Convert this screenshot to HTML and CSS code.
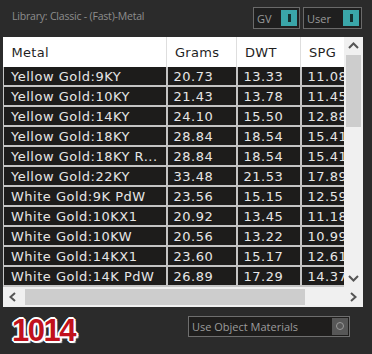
FILE: index.html
```html
<!DOCTYPE html>
<html lang="en">
<head>
  <meta charset="UTF-8" />
  <title>Metal Library</title>
  <link rel="stylesheet" href="styles.css">
</head>
<body>
  <div class="top">
    <span class="title">Library: Classic - (Fast)-Metal</span>
    <div class="toggles">
      <div class="toggle"><span>GV</span><i class="knob"></i></div>
      <div class="toggle user"><span>User</span><i class="knob"></i></div>
    </div>
  </div>

  <div class="panel">
    <div class="view">
      <div class="table-wrap">
        <table class="metals">
          <colgroup>
            <col class="c-metal"><col class="c-grams"><col class="c-dwt"><col class="c-spg">
          </colgroup>
          <thead>
            <tr><th>Metal</th><th>Grams</th><th>DWT</th><th>SPG</th></tr>
          </thead>
          <tbody>
            <tr><td>Yellow Gold:9KY</td><td>20.73</td><td>13.33</td><td>11.08</td></tr>
            <tr><td>Yellow Gold:10KY</td><td>21.43</td><td>13.78</td><td>11.45</td></tr>
            <tr><td>Yellow Gold:14KY</td><td>24.10</td><td>15.50</td><td>12.88</td></tr>
            <tr><td>Yellow Gold:18KY</td><td>28.84</td><td>18.54</td><td>15.41</td></tr>
            <tr><td>Yellow Gold:18KY R...</td><td>28.84</td><td>18.54</td><td>15.41</td></tr>
            <tr><td>Yellow Gold:22KY</td><td>33.48</td><td>21.53</td><td>17.89</td></tr>
            <tr><td>White Gold:9K PdW</td><td>23.56</td><td>15.15</td><td>12.59</td></tr>
            <tr><td>White Gold:10KX1</td><td>20.92</td><td>13.45</td><td>11.18</td></tr>
            <tr><td>White Gold:10KW</td><td>20.56</td><td>13.22</td><td>10.99</td></tr>
            <tr><td>White Gold:14KX1</td><td>23.60</td><td>15.17</td><td>12.61</td></tr>
            <tr><td>White Gold:14K PdW</td><td>26.89</td><td>17.29</td><td>14.37</td></tr>
          </tbody>
        </table>
      </div>
      <div class="vscroll">
        <svg class="arrow" width="19" height="18" viewBox="0 0 19 18"><polyline points="5,11 9.5,6.5 14,11" fill="none" stroke="#555" stroke-width="2"/></svg>
        <div class="vthumb"></div>
        <div class="vtrack"></div>
        <svg class="arrow" width="19" height="18" viewBox="0 0 19 18"><polyline points="5,7 9.5,11.5 14,7" fill="none" stroke="#555" stroke-width="2"/></svg>
      </div>
    </div>
    <div class="hscroll">
      <svg class="arrow" width="20" height="20" viewBox="0 0 20 20"><polyline points="12,6 7.5,10 12,14" fill="none" stroke="#555" stroke-width="2"/></svg>
      <div class="hthumb"></div>
      <div class="htrack"></div>
      <svg class="arrow" width="20" height="20" viewBox="0 0 20 20"><polyline points="8,6 12.5,10 8,14" fill="none" stroke="#555" stroke-width="2"/></svg>
    </div>
  </div>

  <div class="bottom">
    <span class="count">1014</span>
    <div class="check">
      <span>Use Object Materials</span>
      <i class="radio"></i>
    </div>
  </div>
</body>
</html>
```

FILE: styles.css
```css
body { margin: 0; background: #2b2b2b; font-family: "DejaVu Sans", sans-serif; width: 372px; height: 354px; overflow: hidden; }

.top { height: 37px; display: flex; align-items: flex-start; justify-content: space-between; padding: 0 10px 0 12px; box-sizing: border-box; }
.title { font-family: "Open Sans", sans-serif; font-size: 10.5px; color: #8e8e8e; margin-top: 9px; letter-spacing: -0.2px; }
.toggles { display: flex; gap: 3px; margin-top: 7px; }
.toggle { height: 22px; width: 47px; box-sizing: border-box; border: 1px solid #6a6a6a; background: #1f1f1f; display: flex; align-items: center; justify-content: space-between; padding: 0 2px 0 3px; }
.toggle.user { width: 59px; }
.toggle span { font-family: "Open Sans", sans-serif; font-size: 11px; color: #9a9a9a; }
.knob { width: 16px; height: 16px; background: #3aa6a9; position: relative; }
.knob::after { content: ""; position: absolute; left: 7px; top: 4px; width: 3px; height: 8px; background: #15302f; }

.panel { margin-left: 3px; width: 360px; background: #fff; }
.view { display: flex; height: 250px; }
.table-wrap { width: 341px; overflow: hidden; }

.metals { border-collapse: collapse; table-layout: fixed; width: 361px; font-size: 13px; }
.c-metal { width: 163px; }
.c-grams { width: 70px; }
.c-dwt { width: 64px; }
.c-spg { width: 64px; }
.metals th { height: 30px; padding: 0 0 0 8px; text-align: left; font-weight: normal; color: #1f1f1f; background: #fff; border-right: 1px solid #dedede; letter-spacing: 0.3px; }
.metals td { height: 18px; padding: 0 0 0 6px; color: #e6e6e6; background: #1d1c1b; border-right: 2px solid #c4c4c4; border-bottom: 2px solid #c4c4c4; white-space: nowrap; overflow: hidden; letter-spacing: 0.5px; }
.metals td:first-child { border-left: 1px solid #c4c4c4; padding-left: 7px; }

.vscroll { width: 19px; background: #f0f0f0; display: flex; flex-direction: column; }
.arrow { display: block; flex: none; }
.vthumb { height: 72px; margin: 0 2px; background: #cdcdcd; }
.vtrack { flex: 1; }

.hscroll { height: 20px; display: flex; align-items: center; background: #f0f0f0; }
.hthumb { width: 280px; height: 16px; margin-left: 2px; background: #cdcdcd; }
.htrack { flex: 1; }

.bottom { display: flex; justify-content: space-between; align-items: flex-start; padding: 9px 12px 0 12px; }
.count { font-family: "Liberation Sans", sans-serif; font-weight: bold; font-size: 31px; line-height: 30px; letter-spacing: -1.5px; color: #c1111c; text-shadow: -2px 0 #fff, 2px 0 #fff, 0 -2px #fff, 0 2px #fff, -1px -1px #fff, 1px 1px #fff, -1px 1px #fff, 1px -1px #fff, 2px 2px 1px #eee; }
.check { width: 162px; height: 21px; box-sizing: border-box; border: 1px solid #6e6e6e; background: #1f1e1d; display: flex; align-items: center; justify-content: space-between; padding: 0 1px 0 3px; margin-right: 10px; }
.check span { font-family: "Open Sans", sans-serif; font-size: 11px; color: #9c9c9c; }
.radio { width: 16px; height: 17px; background: #575757; position: relative; }
.radio::after { content: ""; position: absolute; left: 4px; top: 4px; width: 6px; height: 6px; border: 1px solid #9a9a9a; border-radius: 50%; }
```
